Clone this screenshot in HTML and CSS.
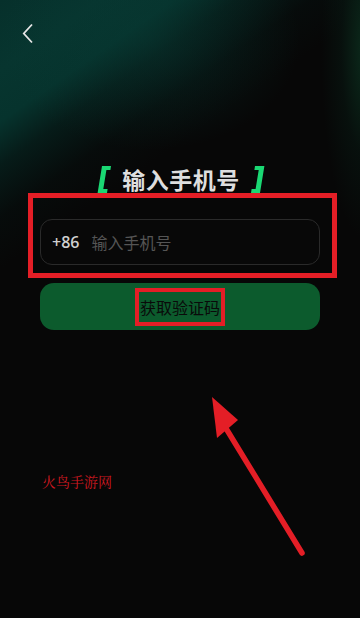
FILE: index.html
```html
<!DOCTYPE html>
<html lang="zh-CN">
<head>
<meta charset="utf-8">
<title>输入手机号</title>
<link rel="stylesheet" href="styles.css">
</head>
<body>
<div class="screen">
  <div class="topbar">
    <svg class="back" width="12" height="22" viewBox="0 0 12 22" aria-hidden="true">
      <polyline points="10,1.5 1.8,10.5 10,19.5" fill="none" stroke="#e6e6e6" stroke-width="1.8" stroke-linejoin="miter"/>
    </svg>
  </div>

  <div class="title">
    <svg class="bracket" width="14" height="27" viewBox="0 0 14 27" aria-hidden="true">
      <polygon points="5,0 14,0 13.4,4 9.4,4 6.3,23 10.6,23 10,27 0.6,27" fill="#1ad873"/>
    </svg>
    <h1 class="title-text">输入手机号</h1>
    <svg class="bracket" width="14" height="27" viewBox="0 0 14 27" aria-hidden="true">
      <polygon points="9,27 0,27 0.6,23 4.6,23 7.7,4 3.4,4 4,0 13.4,0" fill="#1ad873"/>
    </svg>
  </div>

  <div class="mark-box">
    <div class="phone-field">
      <span class="code">+86</span>
      <span class="placeholder">输入手机号</span>
    </div>
  </div>

  <div class="btn">
    <span class="btn-label">获取验证码</span>
  </div>

  <div class="watermark">火鸟手游网</div>

  <svg class="arrow" width="110" height="175" viewBox="0 0 110 175" aria-hidden="true">
    <line x1="97" y1="163" x2="22" y2="40" stroke="#e41e26" stroke-width="5.5" stroke-linecap="round"/>
    <polygon points="7,7 33,30 12,48" fill="#e41e26"/>
  </svg>
</div>
</body>
</html>
```

FILE: styles.css
```css
* { box-sizing: border-box; }
html, body { margin: 0; padding: 0; }
body {
  background: #070707;
  font-family: "Noto Sans CJK SC", "Noto Sans", sans-serif;
}
.screen {
  position: relative;
  width: 360px;
  height: 618px;
  overflow: hidden;
  background:
    radial-gradient(ellipse 45px 190px at 366px 50px, rgba(12, 50, 32, 0.85) 0%, rgba(8, 30, 22, 0.4) 55%, rgba(7, 7, 7, 0) 100%),
    radial-gradient(ellipse 150px 110px at 150px 40px, rgba(8, 58, 52, 0.45) 0%, rgba(8, 58, 52, 0) 100%),
    linear-gradient(145deg, #06302b 0%, #07352f 8%, #06332d 14%, rgba(6, 36, 32, 0.7) 19%, rgba(6, 22, 20, 0.3) 25%, rgba(7, 7, 7, 0) 31%),
    #070707;
  display: flex;
  flex-direction: column;
}
.topbar {
  height: 165px;
  padding: 23px 0 0 22px;
}
.back { display: block; }

.title {
  display: flex;
  align-items: center;
  justify-content: center;
  gap: 11px;
  height: 28px;
  padding-left: 2px;
}
.bracket { display: block; }
.title-text {
  margin: 0;
  font-size: 23px;
  line-height: 28px;
  font-weight: 700;
  color: #dedede;
  letter-spacing: 0.5px;
}

.mark-box {
  margin: 0 0 0 28px;
  width: 309px;
  height: 85px;
  border: 5px solid #e41e26;
  padding: 21px 12px 0 7px;
}
.phone-field {
  height: 46px;
  width: 280px;
  border: 1px solid #2a2a2a;
  border-radius: 12px;
  background: #080808;
  display: flex;
  align-items: center;
  padding-left: 11px;
  gap: 12px;
}
.code {
  font-family: "Open Sans", "Noto Sans", sans-serif;
  font-size: 16px;
  font-weight: 600;
  color: #cfcfcf;
}
.placeholder {
  font-size: 16px;
  color: #555555;
}

.btn {
  margin: 5px 0 0 40px;
  width: 280px;
  height: 47px;
  border-radius: 14px;
  background: #0c5b2d;
  display: flex;
  align-items: center;
  justify-content: center;
}
.btn-label {
  display: inline-block;
  border: 4px solid #e41e26;
  padding: 0 1px;
  height: 38px;
  line-height: 30px;
  font-size: 16px;
  color: #0a0a0a;
}

.watermark {
  margin: 142px 0 0 42px;
  font-size: 14px;
  line-height: 18px;
  color: #cc1820;
  font-family: "Noto Serif CJK SC", "Noto Sans CJK SC", serif;
}

.arrow {
  position: absolute;
  left: 205px;
  top: 390px;
}
```
